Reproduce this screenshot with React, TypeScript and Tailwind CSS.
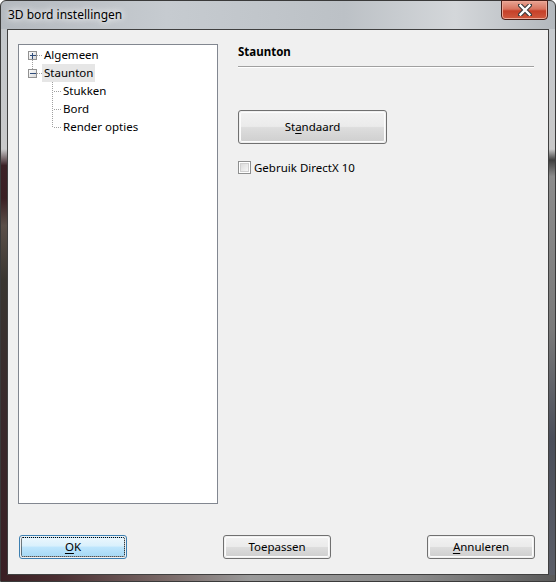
const font = { fontFamily: '"Noto Sans", "Open Sans", sans-serif' };

function Expander({ open }: { open: boolean }) {
  return (
    <g>
      <rect x="9.5" y="5.5" width="8" height="8" fill="url(#exp)" stroke="#919191" />
      <line x1="11" y1="9.5" x2="17" y2="9.5" stroke="#2f4c7a" />
      {!open && <line x1="13.5" y1="7" x2="13.5" y2="13" stroke="#2f4c7a" />}
    </g>
  );
}

function TreeRow({ label, level, kind, selected }: { label: string; level: number; kind: string; selected?: boolean }) {
  return (
    <div className="flex h-[18px] items-center">
      {level === 0 ? (
        <svg width="23" height="18" className="shrink-0">
          <defs>
            <linearGradient id="exp" x1="0" y1="0" x2="1" y2="1">
              <stop offset="0" stopColor="#ffffff" />
              <stop offset="1" stopColor="#d6d6d6" />
            </linearGradient>
          </defs>
          {kind === "first" && <line x1="13.5" y1="14" x2="13.5" y2="18" stroke="#a0a0a0" strokeDasharray="1 1" />}
          {kind === "last" && <line x1="13.5" y1="0" x2="13.5" y2="5" stroke="#a0a0a0" strokeDasharray="1 1" />}
          <line x1="18" y1="9.5" x2="23" y2="9.5" stroke="#a0a0a0" strokeDasharray="1 1" />
          <Expander open={kind === "last"} />
        </svg>
      ) : (
        <svg width="42" height="18" className="shrink-0">
          <line x1="33.5" y1="0" x2="33.5" y2={kind === "end" ? 10 : 18} stroke="#a0a0a0" strokeDasharray="1 1" />
          <line x1="35" y1="9.5" x2="42" y2="9.5" stroke="#a0a0a0" strokeDasharray="1 1" />
        </svg>
      )}
      <span className={`h-[18px] px-[2px] leading-[18px] text-[11.5px] text-black ${selected ? "bg-[#e6e6e6]" : ""}`}>
        {label}
      </span>
    </div>
  );
}

function WinButton({ children, w, h, focused }: { children: React.ReactNode; w: string; h: string; focused?: boolean }) {
  if (focused) {
    return (
      <div className={`${w} ${h} rounded-[3px] border border-[#3c7fb1] p-px`}>
        <div className="flex h-full w-full items-center justify-center rounded-[2px] border border-dotted border-black bg-[linear-gradient(#eaf6fd_0%,#d9f0fc_45%,#bee6fd_50%,#a7d9f5_100%)] text-[11.5px] text-black">
          {children}
        </div>
      </div>
    );
  }
  return (
    <div className={`${w} ${h} rounded-[3px] border border-[#707070] p-px`}>
      <div className="flex h-full w-full items-center justify-center rounded-[2px] bg-[linear-gradient(#f2f2f2_0%,#ebebeb_48%,#dddddd_52%,#cfcfcf_100%)] text-[11.5px] text-black shadow-[inset_0_0_0_1px_#fcfcfc]">
        {children}
      </div>
    </div>
  );
}

export default function App() {
  return (
    <div className="h-[582px] w-[556px] overflow-hidden bg-white" style={font}>
      <div className="relative flex h-full w-full flex-col rounded-t-[6px] border border-[#3a3a3a] bg-[linear-gradient(90deg,#b4b9bf_0%,#c6cbd0_30%,#bcc1c6_62%,#d4d7da_82%,#b3b8bd_100%)]">
        {/* title bar */}
        <div className="flex h-[28px] shrink-0 items-center pl-[7px]">
          <span className="text-[12px] text-black [text-shadow:0_0_6px_#ffffff,0_0_10px_#ffffff]">3D bord instellingen</span>
        </div>
        <div className="absolute right-[7px] top-[-1px] flex h-[20px] w-[47px] items-center justify-center rounded-b-[4px] border border-[#4a1f18] bg-[linear-gradient(#e8a493_0%,#d8745f_45%,#c64028_55%,#cf5a3f_100%)] shadow-[inset_0_0_0_1px_#eda896]">
          <svg width="14" height="12" viewBox="0 0 14 12">
            <path d="M2 1 L12 11 M12 1 L2 11" stroke="#3c3c3c" strokeWidth="4.5" strokeLinecap="square" />
            <path d="M2.5 1.5 L11.5 10.5 M11.5 1.5 L2.5 10.5" stroke="#ffffff" strokeWidth="2.4" strokeLinecap="square" />
          </svg>
        </div>

        <div className="flex flex-1">
          {/* left frame */}
          <div className="w-[6px] bg-[linear-gradient(#c3c7cb_0%,#c9c9ca_22%,#3d2227_25%,#3a1f23_31%,#5b4f49_36%,#3a3631_46%,#3a2a2c_70%,#3a1f24_100%)]" />
          {/* client */}
          <div className="flex flex-1 flex-col border border-[#404040] bg-[#f0f0f0] pl-[10px] pt-[14px]">
            <div className="flex">
              <div className="h-[460px] w-[200px] border border-[#828790] bg-white pt-[1px]">
                <TreeRow label="Algemeen" level={0} kind="first" />
                <TreeRow label="Staunton" level={0} kind="last" selected />
                <TreeRow label="Stukken" level={1} kind="mid" />
                <TreeRow label="Bord" level={1} kind="mid" />
                <TreeRow label="Render opties" level={1} kind="end" />
              </div>
              <div className="ml-[20px] flex w-[296px] flex-col">
                <div className="pt-[1px] text-[11.5px] font-bold leading-[14px] text-black">Staunton</div>
                <div className="mt-[7px] h-[2px] border-t border-b border-t-[#a0a0a0] border-b-white" />
                <div className="mt-[42px]">
                  <WinButton w="w-[149px]" h="h-[34px]">
                    <span>
                      St<span className="underline underline-offset-2">a</span>ndaard
                    </span>
                  </WinButton>
                </div>
                <div className="mt-[17px] flex h-[13px] items-center">
                  <div className="h-[13px] w-[13px] border border-[#8e8f8f] bg-white p-px">
                    <div className="h-full w-full border border-[#d0d0d0] bg-[linear-gradient(135deg,#dcdcdc,#f6f6f6)]" />
                  </div>
                  <span className="ml-[3px] text-[11.5px] leading-[13px] text-black">Gebruik DirectX 10</span>
                </div>
              </div>
            </div>
            <div className="mt-[31px] flex">
              <div className="ml-px">
                <WinButton w="w-[108px]" h="h-[24px]" focused>
                  <span>
                    <span className="underline underline-offset-2">O</span>K
                  </span>
                </WinButton>
              </div>
              <div className="ml-[96px]">
                <WinButton w="w-[108px]" h="h-[24px]">
                  <span>Toepassen</span>
                </WinButton>
              </div>
              <div className="ml-[96px]">
                <WinButton w="w-[108px]" h="h-[24px]">
                  <span>
                    <span className="underline underline-offset-2">A</span>nnuleren
                  </span>
                </WinButton>
              </div>
            </div>
          </div>
          {/* right frame */}
          <div className="w-[6px] bg-[linear-gradient(#c5c9cd_0%,#c8c8c8_22%,#3e3e3e_24%,#8c8c8c_27%,#7a7a7a_55%,#4a4e5a_75%,#5b5e68_100%)]" />
        </div>
        {/* bottom frame */}
        <div className="h-[6px] shrink-0 bg-[linear-gradient(90deg,#3a1f24_0%,#4a2e31_10%,#7a6a68_30%,#9a9a9a_45%,#8a8a8a_75%,#5a5a5a_100%)]" />
      </div>
    </div>
  );
}
